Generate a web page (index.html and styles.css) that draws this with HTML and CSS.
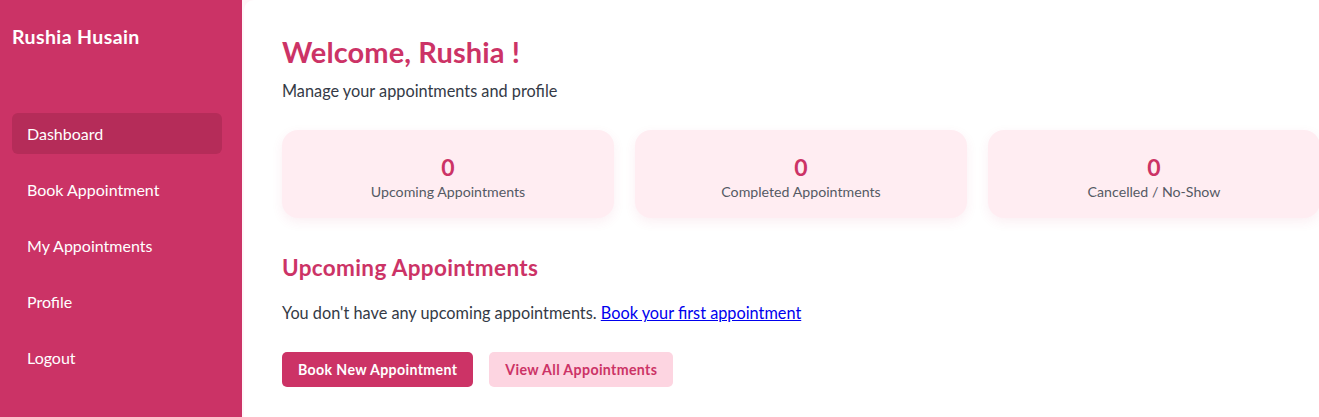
FILE: index.html
```html
<!DOCTYPE html>
<html>
<head>
<meta charset="utf-8">
<link rel="stylesheet" href="styles.css">
</head>
<body>
<div class="layout">
  <aside class="sidebar">
    <div class="brand">Rushia Husain</div>
    <nav class="nav">
      <a class="nav-item active">Dashboard</a>
      <a class="nav-item">Book Appointment</a>
      <a class="nav-item">My Appointments</a>
      <a class="nav-item">Profile</a>
      <a class="nav-item">Logout</a>
    </nav>
  </aside>
  <main class="main">
    <h1 class="title">Welcome, Rushia !</h1>
    <p class="subtitle">Manage your appointments and profile</p>
    <div class="stats">
      <div class="stat"><div class="stat-num">0</div><div class="stat-label">Upcoming Appointments</div></div>
      <div class="stat"><div class="stat-num">0</div><div class="stat-label">Completed Appointments</div></div>
      <div class="stat"><div class="stat-num">0</div><div class="stat-label">Cancelled / No-Show</div></div>
    </div>
    <h2 class="section-title">Upcoming Appointments</h2>
    <p class="empty">You don't have any upcoming appointments. <a href="#" class="link">Book your first appointment</a></p>
    <div class="actions">
      <a class="btn btn-primary">Book New Appointment</a>
      <a class="btn btn-light">View All Appointments</a>
    </div>
  </main>
</div>
</body>
</html>
```

FILE: styles.css
```css
* { box-sizing: border-box; }
html, body { margin: 0; padding: 0; }
body {
  font-family: Lato, "Noto Sans", sans-serif;
  background: #fff5f8;
  width: 1319px;
  height: 417px;
  overflow: hidden;
}
.layout {
  display: flex;
  height: 417px;
}
.sidebar {
  width: 242px;
  flex: none;
  background: #cb3366;
  color: #fff;
  padding: 25px 20px 0 12px;
}
.brand {
  font-size: 19.5px;
  letter-spacing: 0.4px;
  font-weight: 700;
  line-height: 24px;
  height: 88px;
}
.nav {
  display: flex;
  flex-direction: column;
  gap: 15px;
}
.nav-item {
  display: block;
  height: 41px;
  line-height: 41px;
  padding-left: 15px;
  border-radius: 6px;
  font-size: 16px;
  color: #fff;
}
.nav-item.active {
  background: #b52c59;
}
.main {
  flex: 1;
  background: #fff;
  border-top-left-radius: 10px;
  padding: 34px 0 0 38px;
  margin-left: 2px;
}
.title {
  margin: 0;
  font-size: 29px;
  letter-spacing: 0.1px;
  line-height: 36px;
  font-weight: 700;
  color: #cc3366;
}
.subtitle {
  margin: 11px 0 0;
  font-size: 16.3px;
  line-height: 20px;
  color: #343a46;
}
.stats {
  display: flex;
  gap: 21px;
  margin-top: 29px;
}
.stat {
  width: 332px;
  height: 88px;
  background: #ffedf2;
  border-radius: 16px;
  box-shadow: 0 4px 12px rgba(204, 51, 102, 0.08);
  text-align: center;
  padding-top: 23px;
}
.stat-num {
  font-size: 23px;
  font-weight: 700;
  line-height: 28px;
  color: #cc3366;
}
.stat-label {
  margin-top: 2px;
  font-size: 14.2px;
  line-height: 18px;
  color: #555a64;
}
.section-title {
  margin: 37px 0 0;
  font-size: 22.5px;
  letter-spacing: 0.35px;
  line-height: 26px;
  font-weight: 700;
  color: #cc3366;
}
.empty {
  margin: 22px 0 0;
  font-size: 16.3px;
  line-height: 20px;
  color: #343a46;
}
.link { color: #0000ee; }
.actions {
  display: flex;
  gap: 16px;
  margin-top: 29px;
}
.btn {
  display: block;
  height: 35px;
  line-height: 35px;
  padding: 0 16px;
  border-radius: 5px;
  font-size: 14.2px;
  letter-spacing: 0.35px;
  font-weight: 700;
}
.btn-primary { background: #cc3366; color: #fff; }
.btn-light { background: #fdd5e1; color: #cc3366; }
```
